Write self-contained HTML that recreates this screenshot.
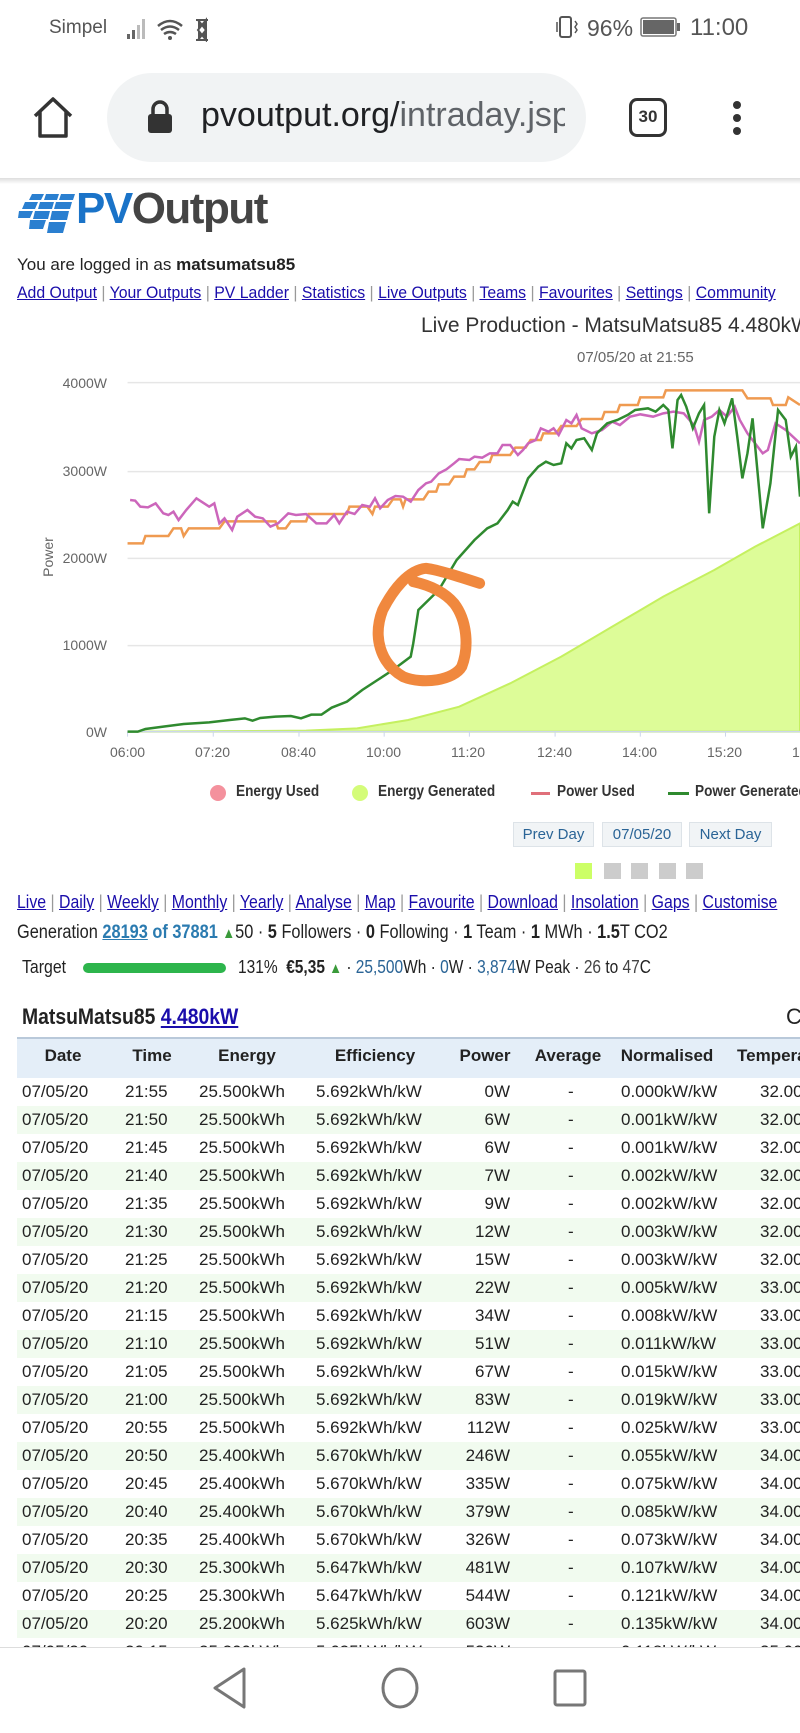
<!DOCTYPE html>
<html><head><meta charset="utf-8">
<style>
*{margin:0;padding:0;box-sizing:border-box}
body{width:800px;height:1733px;overflow:hidden;background:#fff;font-family:"Liberation Sans",sans-serif;color:#222;position:relative}
.a{position:absolute;white-space:nowrap}
.nav a,.lk a{color:#1a0dab;text-decoration:underline}
.sep{color:#999}
.row{position:absolute;left:17px;width:783px;height:28px;font-size:17px;color:#222}
.row.s{background:#f1fbef}
.row span{position:absolute;top:4px;white-space:nowrap}
.btn{position:absolute;top:822px;height:25px;background:#f1f4f6;border:1px solid #dde3e8;color:#2a6496;font-size:15px;text-align:center;line-height:23px}
.sq{position:absolute;top:863px;width:17px;height:16px;background:#ccc}
.b{font-weight:bold}
.bl{color:#2a6496}
</style></head><body>
<!-- status bar -->
<div class="a" style="left:49px;top:17px;font-size:19px;color:#555">Simpel</div>
<svg class="a" style="left:125px;top:14px" width="90" height="28" viewBox="0 0 90 28">
<rect x="2" y="20" width="3" height="5" fill="#666"/><rect x="7" y="16" width="3" height="9" fill="#666"/><rect x="12" y="11" width="3" height="14" fill="#bbb"/><rect x="17" y="5" width="3" height="20" fill="#bbb"/>
<path d="M33 12 q12 -10 24 0 M36 16 q9 -7 18 0 M39 20 q6 -4 12 0" stroke="#555" stroke-width="2.5" fill="none"/>
<circle cx="45" cy="24" r="2" fill="#555"/>
<path d="M71 6 h12 M71 26 h12 M73 6 l8 10 l-8 10 M81 6 l-8 10 l8 10 Z" stroke="#555" stroke-width="2" fill="#555"/>
</svg>
<svg class="a" style="left:554px;top:14px" width="36" height="28"><rect x="6" y="3" width="11" height="20" rx="2" stroke="#555" stroke-width="2" fill="none"/><path d="M3 8 v10 M21 7 l2 3 l-2 3 l2 3 l-2 3" stroke="#555" stroke-width="1.5" fill="none"/></svg>
<div class="a" style="left:587px;top:15px;font-size:23px;color:#555">96%</div>
<svg class="a" style="left:640px;top:16px" width="42" height="24"><rect x="1" y="2" width="35" height="18" rx="2" stroke="#777" stroke-width="1.5" fill="none"/><rect x="3" y="4" width="31" height="14" fill="#666"/><rect x="37" y="7" width="3" height="8" fill="#666"/></svg>
<div class="a" style="left:690px;top:14px;font-size:24px;color:#555">11:00</div>
<!-- browser bar -->
<svg class="a" style="left:31px;top:96px" width="44" height="44" viewBox="0 0 44 44"><path d="M4 20 L22 3 L40 20 M9 16 V40 H35 V16" stroke="#333" stroke-width="3.5" fill="none" stroke-linejoin="round"/></svg>
<div class="a" style="left:107px;top:73px;width:479px;height:89px;border-radius:45px;background:#f1f3f4"></div>
<svg class="a" style="left:147px;top:100px" width="26" height="34"><path d="M6 14 V9 a7 7 0 0 1 14 0 V14" stroke="#333" stroke-width="3.5" fill="none"/><rect x="1" y="14" width="24" height="19" rx="3" fill="#333"/></svg>
<div class="a" style="left:201px;top:96px;font-size:34px;color:#202124;width:364px;overflow:hidden">pvoutput.org/<span style="color:#5f6368">intraday.jsp</span></div>
<div class="a" style="left:629px;top:98px;width:38px;height:39px;border:3.5px solid #333;border-radius:8px;font-size:17px;font-weight:bold;text-align:center;line-height:32px;color:#333">30</div>
<div class="a" style="left:733px;top:101px;width:8px;height:8px;border-radius:4px;background:#333"></div>
<div class="a" style="left:733px;top:114px;width:8px;height:8px;border-radius:4px;background:#333"></div>
<div class="a" style="left:733px;top:127px;width:8px;height:8px;border-radius:4px;background:#333"></div>
<div class="a" style="left:0;top:178px;width:800px;height:6px;background:linear-gradient(#ddd,#fff)"></div>
<!-- logo -->
<svg class="a" style="left:18px;top:192px" width="60" height="42" viewBox="0 0 60 42">
<g fill="#2a7fd0">
<path d="M14 2 h12 l-3 6 h-12 Z"/><path d="M28 2 h13 l-2 6 h-13 Z"/><path d="M43 2 h14 l-2 6 h-14 Z"/>
<path d="M7 10 h13 l-3 7 h-13 Z"/><path d="M22 10 h14 l-2 7 h-14 Z"/><path d="M38 10 h16 l-2 7 h-16 Z"/>
<path d="M1 19 h14 l-3 7 h-12 Z"/><path d="M17 19 h15 l-2 8 h-15 Z"/><path d="M34 19 h17 l-2 9 h-17 Z"/>
<path d="M12 28 h16 l-3 9 h-14 Z"/><path d="M31 30 h17 l-3 11 h-16 Z"/></g></svg>
<div class="a" style="left:76px;top:184px;font-size:44px;font-weight:bold;letter-spacing:-1.5px"><span style="color:#1a73c8">PV</span><span style="color:#444">Output</span></div>
<div class="a" style="left:17px;top:255px;font-size:17px">You are logged in as <b>matsumatsu85</b></div>
<div class="a nav" style="left:17px;top:283px;font-size:17px;transform:scaleX(.93);transform-origin:left">
<a>Add Output</a> <span class="sep">|</span> <a>Your Outputs</a> <span class="sep">|</span> <a>PV Ladder</a> <span class="sep">|</span> <a>Statistics</a> <span class="sep">|</span> <a>Live Outputs</a> <span class="sep">|</span> <a>Teams</a> <span class="sep">|</span> <a>Favourites</a> <span class="sep">|</span> <a>Settings</a> <span class="sep">|</span> <a>Community</a></div>
<!-- chart -->
<div class="a" style="left:421px;top:314px;font-size:21px;color:#333">Live Production - MatsuMatsu85 4.480kW</div>
<div class="a" style="left:577px;top:349px;font-size:15px;color:#666">07/05/20 at 21:55</div>
<div class="a" style="left:28px;top:549px;font-size:14px;color:#666;transform:rotate(-90deg);transform-origin:center">Power</div>
<div class="a" style="left:50px;top:375px;width:57px;text-align:right;font-size:14px;color:#666">4000W</div>
<div class="a" style="left:50px;top:463px;width:57px;text-align:right;font-size:14px;color:#666">3000W</div>
<div class="a" style="left:50px;top:550px;width:57px;text-align:right;font-size:14px;color:#666">2000W</div>
<div class="a" style="left:50px;top:637px;width:57px;text-align:right;font-size:14px;color:#666">1000W</div>
<div class="a" style="left:50px;top:724px;width:57px;text-align:right;font-size:14px;color:#666">0W</div>
<div class="a" style="left:110px;top:744px;font-size:14px;color:#666">06:00</div>
<div class="a" style="left:195px;top:744px;font-size:14px;color:#666">07:20</div>
<div class="a" style="left:281px;top:744px;font-size:14px;color:#666">08:40</div>
<div class="a" style="left:366px;top:744px;font-size:14px;color:#666">10:00</div>
<div class="a" style="left:451px;top:744px;font-size:14px;color:#666">11:20</div>
<div class="a" style="left:537px;top:744px;font-size:14px;color:#666">12:40</div>
<div class="a" style="left:622px;top:744px;font-size:14px;color:#666">14:00</div>
<div class="a" style="left:707px;top:744px;font-size:14px;color:#666">15:20</div>
<div class="a" style="left:792px;top:744px;font-size:14px;color:#666">16:40</div>
<svg class="a" style="left:0;top:310px" width="800" height="460" viewBox="0 0 1568 1380" preserveAspectRatio="none">
<g stroke="#e6e6e6" stroke-width="1.5" vector-effect="non-scaling-stroke"><path d="M250 218H1568M250 485H1568M250 745H1568M250 1007H1568" vector-effect="non-scaling-stroke"/></g>
<path d="M250 1265 L600 1262 L700 1255 L800 1230 L900 1190 L1000 1120 L1100 1040 L1200 950 L1300 860 L1400 780 L1480 710 L1568 640 L1568 1265 Z" fill="#ddfc98" stroke="#c5f060" stroke-width="2" vector-effect="non-scaling-stroke"/>
<path d="M250 1265H1568" stroke="#ccd6eb" stroke-width="1.5" vector-effect="non-scaling-stroke"/>
<path d="M250 1265V1280M418 1265V1280M586 1265V1280M753 1265V1280M920 1265V1280M1088 1265V1280M1255 1265V1280M1422 1265V1280" stroke="#ccd6eb" stroke-width="1" vector-effect="non-scaling-stroke"/>
<polyline fill="none" stroke="#ef9a50" stroke-width="2.5" vector-effect="non-scaling-stroke" points="250,700 280,700 285,678 330,678 340,655 355,655 360,678 370,655 430,655 440,634 540,634 545,655 560,655 570,634 600,634 605,612 680,612 685,590 720,590 730,612 735,590 760,590 770,568 785,568 790,590 795,568 830,568 840,545 855,545 860,523 880,523 890,500 910,500 915,478 930,478 940,456 960,456 965,435 1000,435 1010,413 1030,413 1040,390 1060,390 1065,370 1090,370 1100,348 1130,348 1140,327 1180,327 1185,306 1210,306 1215,285 1250,285 1255,262 1300,262 1305,241 1455,241 1465,265 1510,265 1515,285 1540,285 1545,262 1568,285"/>
<polyline fill="none" stroke="#cc66bb" stroke-width="2.5" vector-effect="non-scaling-stroke" points="255,570 265,572 275,590 290,592 305,580 320,610 330,615 340,605 350,630 365,600 385,565 395,575 410,590 420,580 430,640 440,625 455,660 465,620 485,600 500,620 515,625 530,650 545,640 565,610 580,615 600,612 620,640 640,640 655,615 665,640 680,605 695,612 710,585 725,590 735,565 745,595 760,570 775,558 790,560 805,575 820,540 835,520 845,515 860,490 875,478 890,460 900,447 920,450 930,440 945,443 960,430 975,430 985,405 1000,405 1015,435 1025,420 1035,400 1050,390 1060,355 1075,365 1085,355 1095,375 1110,330 1120,340 1130,315 1140,355 1160,370 1180,360 1200,335 1215,345 1235,320 1255,313 1280,320 1300,310 1320,305 1340,310 1360,345 1370,395 1380,330 1395,320 1410,300 1425,320 1440,290 1450,330 1465,370 1480,400 1495,430 1505,420 1520,340 1540,360 1568,400"/>
<polyline fill="none" stroke="#2f8a2f" stroke-width="2.5" vector-effect="non-scaling-stroke" points="250,1265 270,1265 285,1257 320,1250 360,1242 410,1237 450,1230 480,1225 495,1232 510,1224 540,1220 570,1218 590,1225 610,1214 630,1214 650,1193 680,1175 710,1140 740,1110 770,1080 805,1040 810,1000 820,900 860,840 895,750 930,690 955,655 975,640 995,600 1005,575 1015,585 1035,505 1055,470 1070,455 1085,465 1100,460 1110,400 1120,415 1130,390 1145,385 1160,420 1170,370 1190,340 1210,330 1230,315 1245,300 1270,295 1285,305 1300,285 1310,300 1318,415 1328,270 1335,255 1345,290 1358,355 1370,310 1380,285 1390,610 1400,380 1410,300 1420,340 1435,265 1445,380 1455,505 1465,430 1475,325 1485,490 1495,655 1510,520 1525,300 1540,330 1550,440 1560,410 1568,560"/>
<path d="M940 820 C900 800 860 780 835 775 C800 780 770 840 750 900 C730 980 745 1060 790 1100 C830 1125 890 1110 905 1070 C920 1010 915 930 890 880 C870 845 840 825 810 815" fill="none" stroke="#f0883e" stroke-width="11" stroke-linecap="round" stroke-linejoin="round" vector-effect="non-scaling-stroke"/>
</svg>
<!-- legend -->
<div class="a" style="left:210px;top:785px;width:16px;height:16px;border-radius:8px;background:#f4919d"></div>
<div class="a" style="left:236px;top:783px;font-size:16px;color:#333;font-weight:bold;transform:scaleX(.85);transform-origin:left">Energy Used</div>
<div class="a" style="left:352px;top:785px;width:16px;height:16px;border-radius:8px;background:#d4fc79"></div>
<div class="a" style="left:378px;top:783px;font-size:16px;color:#333;font-weight:bold;transform:scaleX(.85);transform-origin:left">Energy Generated</div>
<div class="a" style="left:531px;top:792px;width:19px;height:3px;background:#e0707a"></div>
<div class="a" style="left:557px;top:783px;font-size:16px;color:#333;font-weight:bold;transform:scaleX(.85);transform-origin:left">Power Used</div>
<div class="a" style="left:668px;top:792px;width:21px;height:3px;background:#2f8a2f"></div>
<div class="a" style="left:695px;top:783px;font-size:16px;color:#333;font-weight:bold;transform:scaleX(.85);transform-origin:left">Power Generated</div>
<div class="btn" style="left:513px;width:81px">Prev Day</div>
<div class="btn" style="left:602px;width:80px">07/05/20</div>
<div class="btn" style="left:689px;width:83px">Next Day</div>
<div class="sq" style="left:575px;background:#ccff66"></div>
<div class="sq" style="left:604px"></div><div class="sq" style="left:631px"></div><div class="sq" style="left:659px"></div><div class="sq" style="left:686px"></div>
<div class="a lk" style="left:17px;top:892px;font-size:18px;transform:scaleX(.88);transform-origin:left"><a>Live</a> <span class="sep">|</span> <a>Daily</a> <span class="sep">|</span> <a>Weekly</a> <span class="sep">|</span> <a>Monthly</a> <span class="sep">|</span> <a>Yearly</a> <span class="sep">|</span> <a>Analyse</a> <span class="sep">|</span> <a>Map</a> <span class="sep">|</span> <a>Favourite</a> <span class="sep">|</span> <a>Download</a> <span class="sep">|</span> <a>Insolation</a> <span class="sep">|</span> <a>Gaps</a> <span class="sep">|</span> <a>Customise</a></div>
<div class="a" style="left:17px;top:922px;font-size:19px;transform:scaleX(.86);transform-origin:left">Generation <b style="color:#2b7bb0;text-decoration:underline">28193</b> <b style="color:#2b7bb0">of 37881</b> <span style="color:#3a9a3a;font-size:15px">▲</span>50 · <b>5</b> Followers · <b>0</b> Following · <b>1</b> Team · <b>1</b> MWh · <b>1.5</b>T CO2</div>
<div class="a" style="left:22px;top:957px;font-size:18px;transform:scaleX(.88);transform-origin:left">Target</div>
<div class="a" style="left:83px;top:963px;width:143px;height:10px;border-radius:5px;background:#2db54c"></div>
<div class="a" style="left:238px;top:957px;font-size:18px;transform:scaleX(.86);transform-origin:left">131% &nbsp;<b>€5,35</b> <span style="color:#3a9a3a;font-size:15px">▲</span> · <span class="bl">25,500</span>Wh · <span class="bl">0</span>W · <span class="bl">3,874</span>W Peak · <span style="color:#444">26</span> to <span style="color:#444">47</span>C</div>
<div class="a" style="left:22px;top:1004px;font-size:22px;font-weight:bold;transform:scaleX(.88);transform-origin:left">MatsuMatsu85 <span style="color:#1a0dab;text-decoration:underline">4.480kW</span></div>
<div class="a" style="left:786px;top:1004px;font-size:22px">Co</div>
<!-- table -->
<div class="a" style="left:17px;top:1037px;width:783px;height:41px;background:#e4eef8;border-top:2px solid #b9c9da"></div>
<div class="a" style="left:17px;top:1046px;width:783px;height:24px;font-size:17px;font-weight:bold">
<span class="a" style="left:46px;transform:translateX(-50%)">Date</span>
<span class="a" style="left:135px;transform:translateX(-50%)">Time</span>
<span class="a" style="left:230px;transform:translateX(-50%)">Energy</span>
<span class="a" style="left:358px;transform:translateX(-50%)">Efficiency</span>
<span class="a" style="left:468px;transform:translateX(-50%)">Power</span>
<span class="a" style="left:551px;transform:translateX(-50%)">Average</span>
<span class="a" style="left:650px;transform:translateX(-50%)">Normalised</span>
<span class="a" style="left:720px">Temperature</span>
</div>
<div id="rows"></div>
<script>
var d=[["21:55","25.500","5.692","0","0.000","32"],["21:50","25.500","5.692","6","0.001","32"],["21:45","25.500","5.692","6","0.001","32"],["21:40","25.500","5.692","7","0.002","32"],["21:35","25.500","5.692","9","0.002","32"],["21:30","25.500","5.692","12","0.003","32"],["21:25","25.500","5.692","15","0.003","32"],["21:20","25.500","5.692","22","0.005","33"],["21:15","25.500","5.692","34","0.008","33"],["21:10","25.500","5.692","51","0.011","33"],["21:05","25.500","5.692","67","0.015","33"],["21:00","25.500","5.692","83","0.019","33"],["20:55","25.500","5.692","112","0.025","33"],["20:50","25.400","5.670","246","0.055","34"],["20:45","25.400","5.670","335","0.075","34"],["20:40","25.400","5.670","379","0.085","34"],["20:35","25.400","5.670","326","0.073","34"],["20:30","25.300","5.647","481","0.107","34"],["20:25","25.300","5.647","544","0.121","34"],["20:20","25.200","5.625","603","0.135","34"],["20:15","25.200","5.625","530","0.118","35"]];
var h="";
for(var i=0;i<d.length;i++){var r=d[i];h+='<div class="row'+(i%2?' s':'')+'" style="top:'+(1078+28*i)+'px"><span style="left:5px">07/05/20</span><span style="left:108px">'+r[0]+'</span><span style="left:182px">'+r[1]+'kWh</span><span style="left:299px">'+r[2]+'kWh/kW</span><span style="right:290px">'+r[3]+'W</span><span style="left:551px">-</span><span style="left:604px">'+r[4]+'kW/kW</span><span style="left:743px">'+r[5]+'.000C</span></div>';}
document.getElementById("rows").innerHTML=h;
</script>
<!-- nav bar -->
<div class="a" style="left:0;top:1647px;width:800px;height:86px;background:#fff;border-top:1.5px solid #ddd"></div>
<svg class="a" style="left:0;top:1647px" width="800" height="86">
<path d="M244 22 L215 41 L244 60 Z" fill="none" stroke="#777" stroke-width="3" stroke-linejoin="round"/>
<ellipse cx="400" cy="41" rx="17" ry="19" fill="none" stroke="#777" stroke-width="3"/>
<rect x="555" y="24" width="30" height="34" rx="2" fill="none" stroke="#777" stroke-width="3"/>
</svg>
</body></html>
